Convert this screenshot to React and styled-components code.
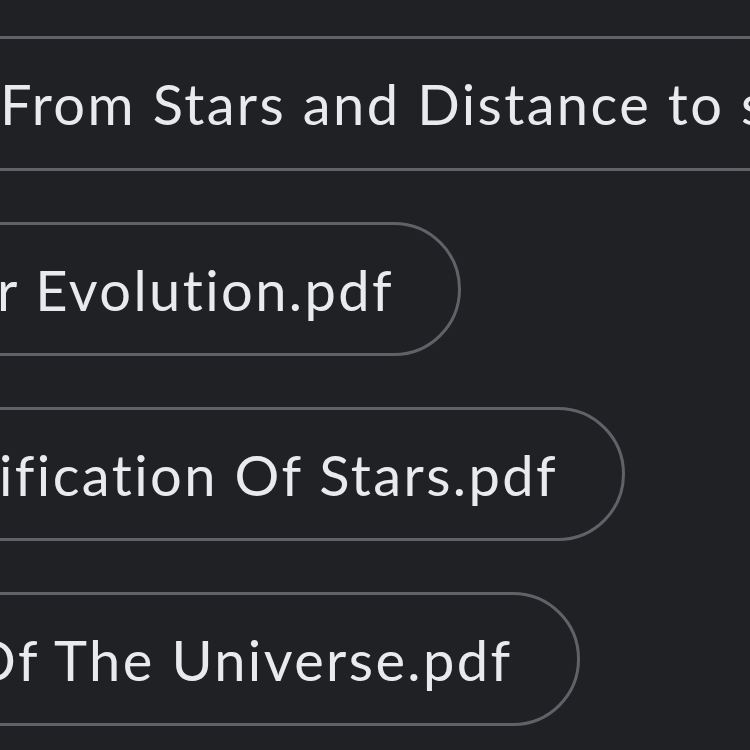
import styled, { createGlobalStyle } from "styled-components";

const GlobalStyle = createGlobalStyle`
  html, body {
    margin: 0;
    background: #202124;
  }
  body {
    width: 750px;
    height: 750px;
    overflow: hidden;
    font-family: Lato, "Open Sans", sans-serif;
    color: #e8eaed;
    font-variant-ligatures: none;
  }
`;

const StyledPage = styled.main`
  padding-top: 36px;
`;

const StyledTitleRow = styled.div`
  display: flex;
  align-items: center;
  height: 129px;
  padding-left: 0;
  border-block: 3px solid #5f6368;
  font-size: 56px;
  letter-spacing: 2.4px;
  white-space: nowrap;
  overflow: hidden;
`;

const StyledAttachments = styled.ul`
  list-style: none;
  margin: 51px 0 0;
  padding: 0;
  display: flex;
  flex-direction: column;
  align-items: flex-start;
  gap: 51px;
`;

const StyledChip = styled.li`
  display: flex;
  align-items: center;
  height: 128px;
  margin-left: -120px;
  padding-left: ${(p) => 120 + p.$indent}px;
  padding-right: 64px;
  border: 3px solid #5f6368;
  border-radius: 67px;
  font-size: 56px;
  letter-spacing: 2.4px;
  white-space: nowrap;
`;

const attachments = [
  { id: 1, name: "r Evolution.pdf", indent: -6 },
  { id: 2, name: "ification Of Stars.pdf", indent: -4 },
  { id: 3, name: "Of The Universe.pdf", indent: -32 },
];

function App() {
  return (
    <>
      <GlobalStyle />
      <StyledPage>
        <StyledTitleRow>From Stars and Distance to stars</StyledTitleRow>
        <StyledAttachments>
          {attachments.map((file) => (
            <StyledChip key={file.id} $indent={file.indent}>
              {file.name}
            </StyledChip>
          ))}
        </StyledAttachments>
      </StyledPage>
    </>
  );
}

export default App;
